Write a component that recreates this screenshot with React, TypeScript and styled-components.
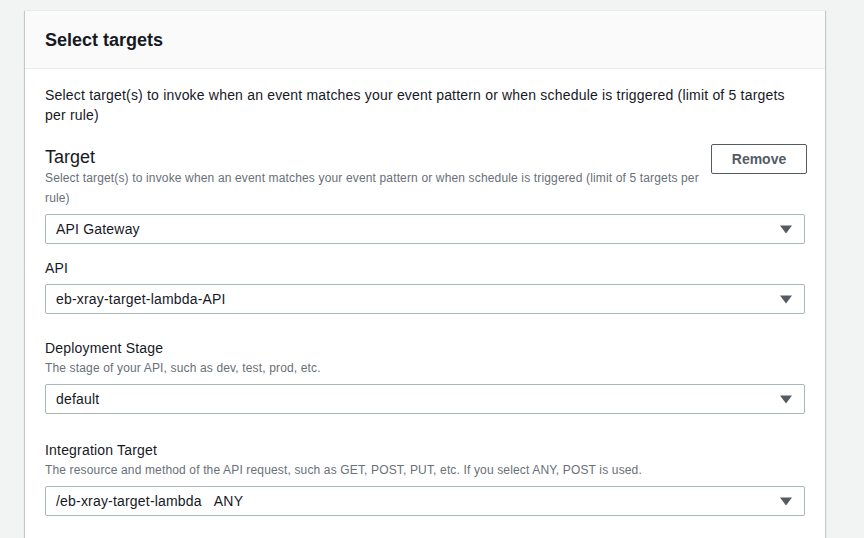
import React from "react"
import styled, { createGlobalStyle } from "styled-components"

const GlobalStyle = createGlobalStyle`
  body {
    margin: 0;
    background: #f2f3f3;
    font-family: "Liberation Sans", Arial, sans-serif;
    color: #16191f;
  }
`

const Page = styled.div`
  padding: 10px 0 0 25px;
  height: 538px;
  box-sizing: border-box;
  overflow: hidden;
`

const Card = styled.section`
  width: 800px;
  background: #fff;
  border-top: 1px solid #eaeded;
  box-shadow: 0 1px 1px 0 rgba(0, 28, 36, 0.3), 1px 1px 1px 0 rgba(0, 28, 36, 0.15),
    -1px 1px 1px 0 rgba(0, 28, 36, 0.15);
`

const CardHeader = styled.header`
  display: flex;
  align-items: center;
  height: 57px;
  padding: 0 20px;
  background: #fafafa;
  border-bottom: 1px solid #eaeded;
`

const CardTitle = styled.h2`
  margin: 0;
  font-size: 18px;
  font-weight: bold;
  line-height: 22px;
`

const CardBody = styled.div`
  padding: 16px 20px 30px;
`

const Intro = styled.p`
  margin: 0;
  font-size: 14px;
  line-height: 20px;
  letter-spacing: 0.19px;
`

const TargetRow = styled.div`
  display: flex;
  align-items: flex-start;
  justify-content: space-between;
  margin-top: 19px;
`

const TargetHeading = styled.div`
  padding-top: 2px;
  width: 660px;
`

const TargetTitle = styled.h3`
  margin: 0;
  font-size: 18px;
  font-weight: normal;
  line-height: 22px;
`

const Description = styled.div`
  font-size: 12px;
  line-height: 20px;
  letter-spacing: 0.15px;
  color: #687078;
`

const RemoveButton = styled.button`
  width: 96px;
  height: 30px;
  margin-right: -2px;
  background: #fff;
  border: 1px solid #545b64;
  border-radius: 2px;
  font-family: inherit;
  font-size: 14px;
  font-weight: bold;
  color: #545b64;
`

const Field = styled.div<{ $gap: number }>`
  margin-top: ${({ $gap }) => $gap}px;
`

const Label = styled.div`
  font-size: 14px;
  line-height: 20px;
  letter-spacing: 0.19px;
`

const SelectBox = styled.div`
  display: flex;
  align-items: center;
  justify-content: space-between;
  height: 30px;
  margin-top: 6px;
  padding: 0 12px 0 10px;
  box-sizing: border-box;
  border: 1px solid #aab7b8;
  border-radius: 2px;
  font-size: 14px;
  letter-spacing: 0.19px;
`

const SelectValue = styled.span`
  display: flex;
  gap: 12px;
`

const Caret = () => (
  <svg width="12" height="9" viewBox="0 0 12 9">
    <path d="M0 0.5h12L6 8.5z" fill="#545b64" />
  </svg>
)

const Select: React.FC<{ children: React.ReactNode }> = ({ children }) => (
  <SelectBox>
    <SelectValue>{children}</SelectValue>
    <Caret />
  </SelectBox>
)

export default function App() {
  return (
    <Page>
      <GlobalStyle />
      <Card>
        <CardHeader>
          <CardTitle>Select targets</CardTitle>
        </CardHeader>
        <CardBody>
          <Intro>
            Select target(s) to invoke when an event matches your event pattern or when
            schedule is triggered (limit of 5 targets per rule)
          </Intro>
          <TargetRow>
            <TargetHeading>
              <TargetTitle>Target</TargetTitle>
              <Description>
                Select target(s) to invoke when an event matches your event pattern or when
                schedule is triggered (limit of 5 targets per rule)
              </Description>
            </TargetHeading>
            <RemoveButton>Remove</RemoveButton>
          </TargetRow>
          <Select>API Gateway</Select>
          <Field $gap={14}>
            <Label>API</Label>
            <Select>eb-xray-target-lambda-API</Select>
          </Field>
          <Field $gap={24}>
            <Label>Deployment Stage</Label>
            <Description>The stage of your API, such as dev, test, prod, etc.</Description>
            <Select>default</Select>
          </Field>
          <Field $gap={26}>
            <Label>Integration Target</Label>
            <Description>
              The resource and method of the API request, such as GET, POST, PUT, etc. If you
              select ANY, POST is used.
            </Description>
            <Select>
              <span>/eb-xray-target-lambda</span>
              <span>ANY</span>
            </Select>
          </Field>
        </CardBody>
      </Card>
    </Page>
  )
}
